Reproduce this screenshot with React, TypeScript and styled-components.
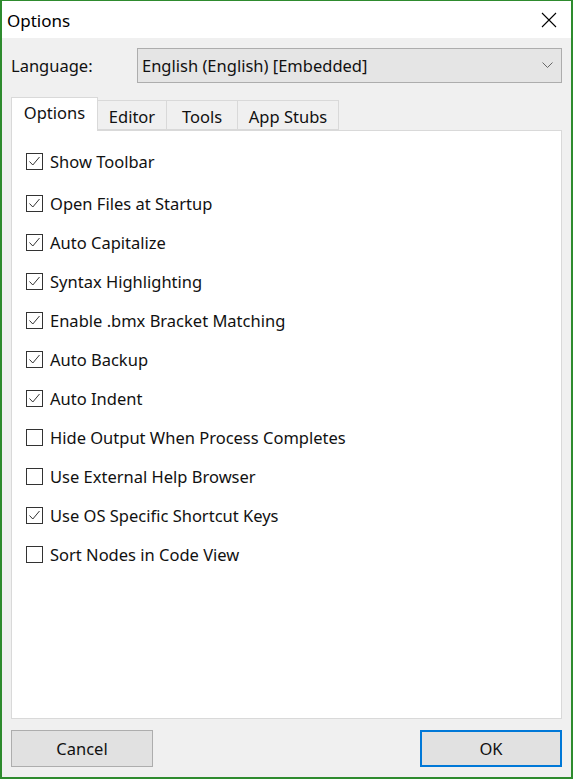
import React from "react";
import styled, { createGlobalStyle } from "styled-components";

const Global = createGlobalStyle`
  html, body { margin: 0; padding: 0; background: #f0f0f0; }
  body { font-family: "Noto Sans", "Segoe UI", sans-serif; }
`;

const Window = styled.div`
  width: 573px;
  height: 779px;
  box-sizing: border-box;
  border: 2px solid #2e8b2e;
  border-top-width: 1px;
  background: #f0f0f0;
  display: flex;
  flex-direction: column;
  font-family: "Noto Sans", sans-serif;
  color: #000;
`;

const TitleBar = styled.div`
  height: 37px;
  background: #fff;
  display: flex;
  align-items: center;
  justify-content: space-between;
  padding: 0 14px 0 5px;
  font-size: 17px;
`;

const TitleText = styled.span`
  padding-top: 2px;
`;

const Body = styled.div`
  flex: 1;
  display: flex;
  flex-direction: column;
  padding: 10px 9px 10px 9px;
`;

const LangRow = styled.div`
  display: flex;
  align-items: center;
  height: 35px;
`;

const LangLabel = styled.span`
  width: 126px;
  font-size: 16.5px;
  color: #111;
`;

const Combo = styled.div`
  flex: 1;
  height: 35px;
  box-sizing: border-box;
  background: #e5e5e5;
  border: 1px solid #adadad;
  display: flex;
  align-items: center;
  justify-content: space-between;
  padding: 0 8px 0 4px;
  font-size: 16.5px;
  color: #111;
`;

const TabStrip = styled.div`
  display: flex;
  align-items: flex-end;
  margin-top: 14px;
  height: 33px;
  position: relative;
  z-index: 1;
`;

const Tab = styled.div<{ $active?: boolean; $first?: boolean; $w: number }>`
  box-sizing: border-box;
  height: ${(p) => (p.$active ? 34 : 30)}px;
  margin-bottom: ${(p) => (p.$active ? -1 : 0)}px;
  width: ${(p) => p.$w}px;
  display: flex;
  align-items: center;
  justify-content: center;
  background: ${(p) => (p.$active ? "#fff" : "#f0f0f0")};
  border: 1px solid #d9d9d9;
  border-bottom: ${(p) => (p.$active ? "none" : "1px solid #d9d9d9")};
  border-left: ${(p) => (p.$first || p.$active ? "1px solid #d9d9d9" : "none")};
  font-size: 16.5px;
  color: #111;
  padding-top: ${(p) => (p.$active ? 0 : 2)}px;
  padding-bottom: ${(p) => (p.$active ? 4 : 0)}px;
`;

const Panel = styled.div`
  flex: 1;
  background: #fff;
  border: 1px solid #d9d9d9;
  padding: 11px 0 0 14px;
  display: flex;
  flex-direction: column;
`;

const Row = styled.label<{ $first?: boolean }>`
  display: flex;
  align-items: center;
  height: 39px;
  margin-bottom: ${(p) => (p.$first ? 3 : 0)}px;
  font-size: 16.5px;
  color: #111;
  gap: 7px;
`;

const Box = styled.span`
  width: 17px;
  height: 17px;
  box-sizing: border-box;
  border: 1px solid #333;
  background: #fff;
  display: inline-flex;
  align-items: center;
  justify-content: center;
`;

const ButtonRow = styled.div`
  display: flex;
  justify-content: space-between;
  margin-top: 11px;
`;

const Button = styled.div<{ $default?: boolean }>`
  width: 142px;
  height: 37px;
  box-sizing: border-box;
  background: #e1e1e1;
  border: ${(p) => (p.$default ? "2px solid #0078d7" : "1px solid #adadad")};
  display: flex;
  align-items: center;
  justify-content: center;
  font-size: 16.5px;
  color: #111;
`;

const Check = () => (
  <svg width="15" height="15" viewBox="0 0 15 15">
    <path d="M2.5 7.5 L5.8 11 L12.5 3" fill="none" stroke="#333" strokeWidth="1" />
  </svg>
);

const items: [string, boolean][] = [
  ["Show Toolbar", true],
  ["Open Files at Startup", true],
  ["Auto Capitalize", true],
  ["Syntax Highlighting", true],
  ["Enable .bmx Bracket Matching", true],
  ["Auto Backup", true],
  ["Auto Indent", true],
  ["Hide Output When Process Completes", false],
  ["Use External Help Browser", false],
  ["Use OS Specific Shortcut Keys", true],
  ["Sort Nodes in Code View", false],
];

export default function App() {
  return (
    <>
      <Global />
      <Window>
        <TitleBar>
          <TitleText>Options</TitleText>
          <svg width="16" height="16" viewBox="0 0 16 16">
            <path d="M1 1 L15 15 M15 1 L1 15" stroke="#000" strokeWidth="1.1" />
          </svg>
        </TitleBar>
        <Body>
          <LangRow>
            <LangLabel>Language:</LangLabel>
            <Combo>
              <span>English (English) [Embedded]</span>
              <svg width="11" height="7" viewBox="0 0 11 7">
                <path d="M0.5 0.5 L5.5 5.5 L10.5 0.5" fill="none" stroke="#666" strokeWidth="1" />
              </svg>
            </Combo>
          </LangRow>
          <TabStrip>
            <Tab $active $first $w={87}>Options</Tab>
            <Tab $w={69}>Editor</Tab>
            <Tab $w={71}>Tools</Tab>
            <Tab $w={101}>App Stubs</Tab>
          </TabStrip>
          <Panel>
            {items.map(([t, c], i) => (
              <Row key={t} $first={i === 0}>
                <Box>{c && <Check />}</Box>
                <span>{t}</span>
              </Row>
            ))}
          </Panel>
          <ButtonRow>
            <Button>Cancel</Button>
            <Button $default>OK</Button>
          </ButtonRow>
        </Body>
      </Window>
    </>
  );
}
